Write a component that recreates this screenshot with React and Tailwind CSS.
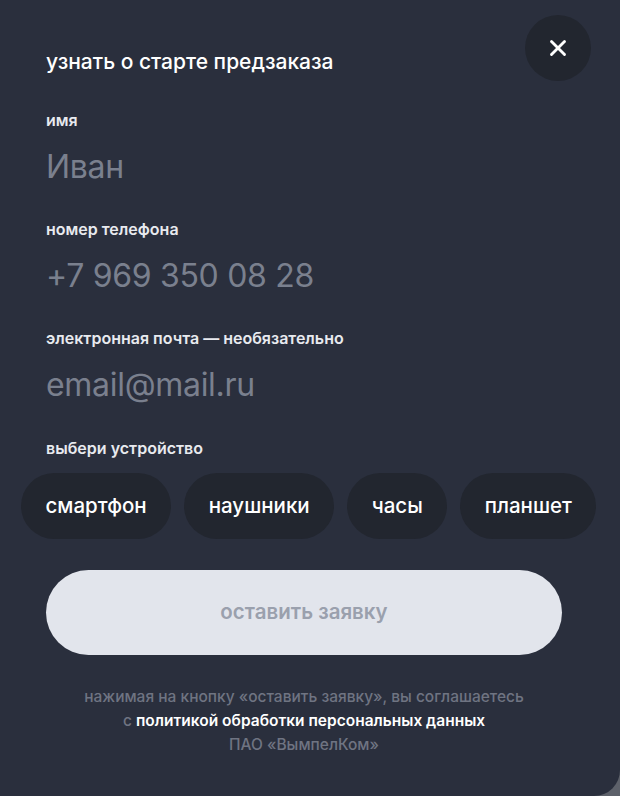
import { X } from "lucide-react";

const devices = ["смартфон", "наушники", "часы", "планшет"];

function Field({ label, value }) {
  return (
    <div>
      <div className="text-[16px] font-semibold leading-5 text-[#e8eaef]">{label}</div>
      <div className="mt-[19px] text-[32px] leading-9 tracking-[-0.3px] text-[#7a808e]">{value}</div>
    </div>
  );
}

export default function App() {
  return (
    <div
      className="min-h-[796px] w-[620px] bg-[#5d616a]"
      style={{ fontFamily: "Inter, 'Liberation Sans', sans-serif" }}
    >
      <div className="relative h-[796px] overflow-hidden rounded-br-[26px] bg-[#2a2f3d] pl-[46px] pr-[59px] pt-[48px]">
        <button className="absolute right-[29px] top-[15px] flex h-[66px] w-[66px] items-center justify-center rounded-full bg-[#22262f] text-white">
          <X size={26} strokeWidth={2.6} />
        </button>

        <h1 className="text-[21px] font-medium leading-7 text-white">узнать о старте предзаказа</h1>

        <div className="mt-[34px] flex flex-col gap-[34px]">
          <Field label="имя" value="Иван" />
          <Field label="номер телефона" value="+7 969 350 08 28" />
          <Field label="электронная почта — необязательно" value="email@mail.ru" />
        </div>

        <div className="mt-[35px] text-[16px] font-semibold leading-5 text-[#e8eaef]">выбери устройство</div>

        <div className="-ml-[25px] mt-[15px] flex gap-[13px] whitespace-nowrap">
          {devices.map((d) => (
            <div
              key={d}
              className="flex h-[66px] items-center rounded-full bg-[#22262f] px-[24.5px] text-[20.5px] font-medium text-white"
            >
              {d}
            </div>
          ))}
        </div>

        <button className="mt-[31px] flex h-[85px] w-[516px] items-center justify-center rounded-full bg-[#e2e5ec] text-[20.5px] font-semibold text-[#9aa0ad]">
          оставить заявку
        </button>

        <p className="mt-[30px] w-[516px] text-center text-[15.5px] font-medium leading-6 text-[#6f7482]">
          нажимая на кнопку «оставить заявку», вы соглашаетесь
          <br />
          с <span className="font-semibold text-white">политикой обработки персональных данных</span>
          <br />
          ПАО «ВымпелКом»
        </p>
      </div>
    </div>
  );
}
